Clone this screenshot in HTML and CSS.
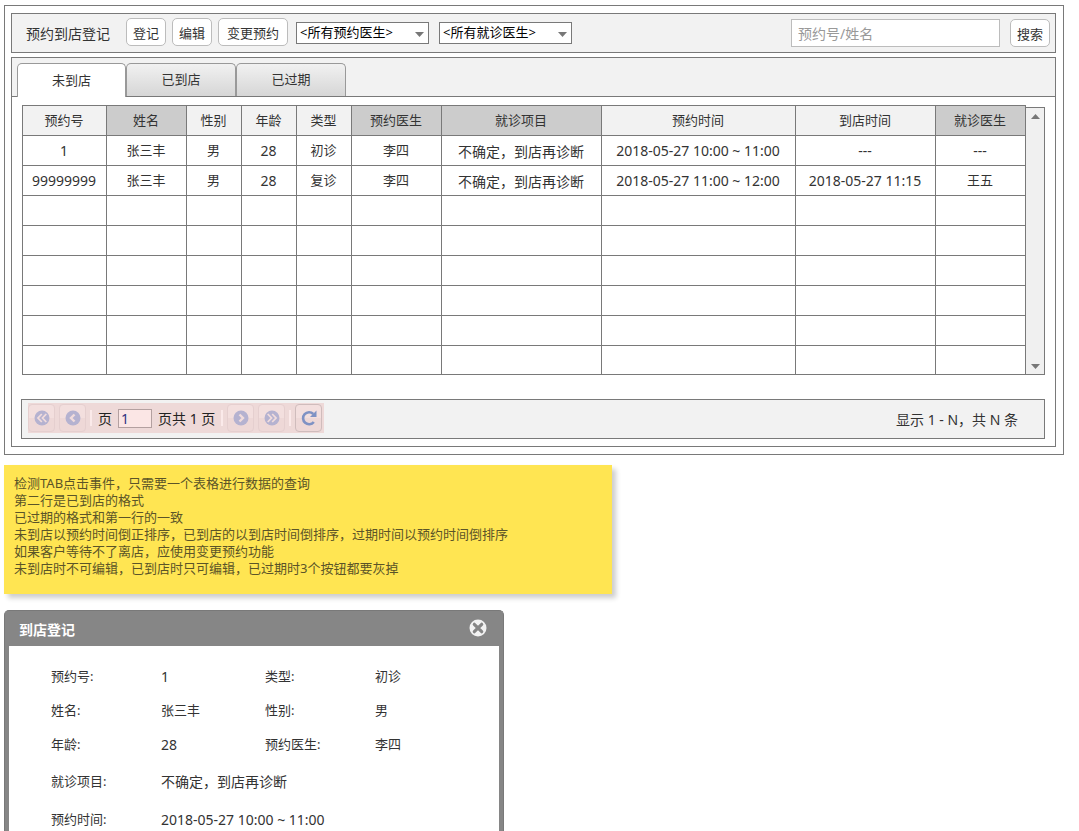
FILE: index.html
```html
<!DOCTYPE html>
<html lang="zh-CN">
<head>
<meta charset="utf-8">
<title>预约到店登记</title>
<link rel="stylesheet" href="styles.css">
</head>
<body>
<main class="frame">
  <header class="toolbar">
    <h1 class="title">预约到店登记</h1>
    <button class="btn" type="button">登记</button>
    <button class="btn" type="button">编辑</button>
    <button class="btn btn-wide" type="button">变更预约</button>
    <div class="filters">
      <select class="filter" aria-label="预约医生"><option>&lt;所有预约医生&gt;</option></select>
      <select class="filter" aria-label="就诊医生"><option>&lt;所有就诊医生&gt;</option></select>
    </div>
    <form class="search">
      <input class="search-input" type="text" placeholder="预约号/姓名" aria-label="预约号/姓名">
      <button class="btn" type="button">搜索</button>
    </form>
  </header>

  <section class="panel">
    <div class="tabs" role="tablist">
      <button class="tab tab-active" type="button" role="tab" aria-selected="true">未到店</button>
      <button class="tab" type="button" role="tab" aria-selected="false">已到店</button>
      <button class="tab" type="button" role="tab" aria-selected="false">已过期</button>
    </div>
    <div class="panel-body">
      <div class="grid">
        <table class="table">
          <colgroup>
            <col class="c-no"><col class="c-name"><col class="c-small"><col class="c-small"><col class="c-small">
            <col class="c-doctor"><col class="c-item"><col><col class="c-arrive"><col class="c-doctor">
          </colgroup>
          <thead>
            <tr><th>预约号</th><th class="dark">姓名</th><th>性别</th><th>年龄</th><th>类型</th><th class="dark">预约医生</th><th class="dark">就诊项目</th><th>预约时间</th><th>到店时间</th><th class="dark">就诊医生</th></tr>
          </thead>
          <tbody>
            <tr><td class="num">1</td><td>张三丰</td><td>男</td><td class="num">28</td><td>初诊</td><td>李四</td><td class="item">不确定，到店再诊断</td><td class="num">2018-05-27 10:00 ~ 11:00</td><td class="num">---</td><td class="num">---</td></tr>
            <tr><td class="num">99999999</td><td>张三丰</td><td>男</td><td class="num">28</td><td>复诊</td><td>李四</td><td class="item">不确定，到店再诊断</td><td class="num">2018-05-27 11:00 ~ 12:00</td><td class="num">2018-05-27 11:15</td><td>王五</td></tr>
            <tr><td></td><td></td><td></td><td></td><td></td><td></td><td></td><td></td><td></td><td></td></tr>
            <tr><td></td><td></td><td></td><td></td><td></td><td></td><td></td><td></td><td></td><td></td></tr>
            <tr><td></td><td></td><td></td><td></td><td></td><td></td><td></td><td></td><td></td><td></td></tr>
            <tr><td></td><td></td><td></td><td></td><td></td><td></td><td></td><td></td><td></td><td></td></tr>
            <tr><td></td><td></td><td></td><td></td><td></td><td></td><td></td><td></td><td></td><td></td></tr>
            <tr class="last"><td></td><td></td><td></td><td></td><td></td><td></td><td></td><td></td><td></td><td></td></tr>
          </tbody>
        </table>
        <div class="scrollbar" aria-hidden="true">
          <svg width="9" height="5" viewBox="0 0 9 5"><path d="M0 5L4.500 0L9 5z" fill="#777"/></svg>
          <svg width="9" height="5" viewBox="0 0 9 5"><path d="M0 0L4.500 5L9 0z" fill="#777"/></svg>
        </div>
      </div>
      <footer class="footer">
        <div class="pager">
          <button class="page-btn" type="button" disabled aria-label="首页">
            <svg width="16" height="16" viewBox="0 0 16 16"><circle cx="8" cy="8" r="7.500" fill="#b5b2d0"/><path d="M7.800 4L4 8L7.800 12M12.300 4L8.500 8L12.300 12" fill="none" stroke="#f1dcdc" stroke-width="1.800"/></svg>
          </button>
          <button class="page-btn" type="button" disabled aria-label="上一页">
            <svg width="16" height="16" viewBox="0 0 16 16"><circle cx="8" cy="8" r="7.500" fill="#b5b2d0"/><path d="M9.500 4.500L6 8L9.500 11.500" fill="none" stroke="#f1dcdc" stroke-width="2.400"/></svg>
          </button>
          <span class="sep"></span>
          <label class="page-label" for="page">页</label>
          <input class="page-input" id="page" type="text" value="1">
          <span class="page-label">页共 1 页</span>
          <span class="sep"></span>
          <button class="page-btn" type="button" disabled aria-label="下一页">
            <svg width="16" height="16" viewBox="0 0 16 16"><circle cx="8" cy="8" r="7.500" fill="#b5b2d0"/><path d="M6.500 4.500L10 8L6.500 11.500" fill="none" stroke="#f1dcdc" stroke-width="2.400"/></svg>
          </button>
          <button class="page-btn" type="button" disabled aria-label="末页">
            <svg width="16" height="16" viewBox="0 0 16 16"><circle cx="8" cy="8" r="7.500" fill="#b5b2d0"/><path d="M3.700 4L7.500 8L3.700 12M8.200 4L12 8L8.200 12" fill="none" stroke="#f1dcdc" stroke-width="1.800"/></svg>
          </button>
          <span class="sep"></span>
          <button class="page-btn refresh" type="button" aria-label="刷新">
            <svg width="16" height="16" viewBox="0 0 16 16"><path d="M12.300 4A6 6 0 1 0 12.800 12" fill="none" stroke="#7f92c4" stroke-width="2.600"/><path d="M15.500 0.500V7H9z" fill="#7f92c4"/></svg>
          </button>
        </div>
        <p class="summary">显示 1 - N，共 N 条</p>
      </footer>
    </div>
  </section>
</main>

<aside class="note">
  <p>检测TAB点击事件，只需要一个表格进行数据的查询</p>
  <p>第二行是已到店的格式</p>
  <p>已过期的格式和第一行的一致</p>
  <p>未到店以预约时间倒正排序，已到店的以到店时间倒排序，过期时间以预约时间倒排序</p>
  <p>如果客户等待不了离店，应使用变更预约功能</p>
  <p>未到店时不可编辑，已到店时只可编辑，已过期时3个按钮都要灰掉</p>
</aside>

<section class="dialog" aria-labelledby="dialog-title">
  <header class="dialog-head">
    <h2 class="dialog-title" id="dialog-title">到店登记</h2>
    <button class="close" type="button" aria-label="关闭">
      <svg width="18" height="18" viewBox="0 0 18 18"><circle cx="9" cy="9" r="8.500" fill="#f2f2f2"/><path d="M5.300 5.300L12.700 12.700M12.700 5.300L5.300 12.700" stroke="#868686" stroke-width="3.200" stroke-linecap="round"/></svg>
    </button>
  </header>
  <dl class="details">
    <dt>预约号:</dt><dd class="num">1</dd><dt>类型:</dt><dd>初诊</dd>
    <dt>姓名:</dt><dd>张三丰</dd><dt>性别:</dt><dd>男</dd>
    <dt>年龄:</dt><dd class="num">28</dd><dt>预约医生:</dt><dd>李四</dd>
    <dt>就诊项目:</dt><dd class="wide large">不确定，到店再诊断</dd>
    <dt>预约时间:</dt><dd class="wide num">2018-05-27 10:00 ~ 11:00</dd>
  </dl>
</section>
</body>
</html>
```
FILE: styles.css
```css
* { box-sizing: border-box; }

body {
  margin: 0;
  padding: 5px 15px 0 4px;
  height: 100vh;
  overflow: hidden;
  display: flex;
  flex-direction: column;
  background: #fff;
  color: #333;
  font: 13px/17px "Noto Sans", "Noto Sans CJK SC", sans-serif;
}

h1, h2, p, dl, dd { margin: 0; }
button, input, select { font: inherit; color: inherit; }
svg { display: block; }

.frame {
  border: 1px solid #797979;
  padding: 7px 7px 7px 6px;
  display: flex;
  flex-direction: column;
  gap: 4px;
}

.toolbar {
  display: flex;
  align-items: center;
  gap: 6px;
  height: 40px;
  padding: 0 5px 2px 14px;
  border: 1px solid #797979;
  background: #f2f2f2;
}
.title { margin-right: 10px; padding-top: 2px; font-size: 14px; font-weight: 400; }
.btn {
  height: 28px;
  padding: 2px 6px 0;
  border: 1px solid #bcbcbc;
  border-radius: 5px;
  background: #fff;
}
.btn-wide { padding: 2px 8px 0; }
.filters { display: flex; gap: 10px; margin-left: 2px; padding-top: 2px; }
.filter {
  appearance: none;
  width: 133px;
  height: 22px;
  padding: 0 20px 1px 3px;
  border: 1px solid #797979;
  border-radius: 0;
  background: url("data:image/svg+xml,%3Csvg xmlns='http://www.w3.org/2000/svg' width='9' height='5'%3E%3Cpath d='M0 0L4.500 5L9 0z' fill='%23777'/%3E%3C/svg%3E") no-repeat right 4px top 9px #fff;
  color: #000;
}
.search { display: flex; gap: 10px; margin-left: auto; padding-top: 2px; }
.search-input {
  width: 209px;
  height: 28px;
  padding: 0 6px;
  border: 1px solid #bcbcbc;
  background: #fff;
  font-size: 14px;
}
.search-input::placeholder { color: #999; }

.panel { border: 1px solid #797979; }
.tabs {
  display: flex;
  height: 39px;
  padding: 5px 5px 0;
  border-bottom: 1px solid #797979;
  background: #f2f2f2;
}
.tab {
  width: 110px;
  height: 33px;
  padding: 0 0 2px;
  border: 1px solid #999;
  border-bottom: 0;
  border-radius: 5px 5px 0 0;
  background: linear-gradient(#f1f1f1, #d6d6d6);
}
.tab-active { width: 109px; height: 34px; padding: 0; background: #fff; }

.panel-body { padding: 8px 10px 7px 9px; }
.grid { display: flex; padding-left: 1px; }
.table {
  flex: 1;
  width: 0;
  table-layout: fixed;
  border-collapse: collapse;
}
.table th, .table td {
  height: 30px;
  padding: 0 1px 1px 0;
  border: 1px solid #797979;
  font-weight: 400;
  text-align: center;
  white-space: nowrap;
}
.table .last td { height: 29px; }
.table th { background: #f2f2f2; }
.table .dark { background: #ccc; }
.table .item { padding-top: 2px; font-size: 14px; }
.num { font-size: 14px; }
.c-no { width: 84px; }
.c-name { width: 80px; }
.c-small { width: 55px; }
.c-doctor { width: 90px; }
.c-item { width: 160px; }
.c-arrive { width: 140px; }
.scrollbar {
  width: 19px;
  margin-top: 2px;
  padding: 6px 4px 5px;
  display: flex;
  flex-direction: column;
  justify-content: space-between;
  align-items: center;
  border: 1px solid #797979;
  border-left: 0;
  background: #f0f0f0;
}

.footer {
  display: flex;
  justify-content: space-between;
  height: 40px;
  margin-top: 24px;
  padding: 3px 26px 0 6px;
  border: 1px solid #797979;
  background: #f2f2f2;
}
.pager {
  display: flex;
  align-items: center;
  gap: 4px;
  height: 30px;
  padding-right: 2px;
  background: #eed9d8;
}
.page-btn {
  display: flex;
  align-items: center;
  justify-content: center;
  width: 27px;
  height: 28px;
  padding: 0;
  border: 1px solid #e5cfcf;
  border-radius: 4px;
  background: linear-gradient(#f3dfde 50%, #eed8d7 50%);
}
.refresh { border-color: #cfbcbc; }
.sep { width: 2px; height: 16px; background: #fbeaea; }
.page-label { padding: 0 2px; font-size: 14px; color: #222; }
.page-input {
  width: 34px;
  height: 19px;
  padding: 0 2px;
  border: 1px solid #b3a0a0;
  background: #fbe6e5;
  color: #303080;
  font-size: 14px;
}
.summary { padding-top: 8px; font-size: 14px; }

.note {
  width: 608px;
  height: 129px;
  margin-top: 10px;
  padding: 10px;
  background: #ffe552;
  color: #5b5428;
  box-shadow: 4px 4px 5px rgba(0, 0, 0, 0.2);
}

.dialog {
  flex: 1;
  min-height: 0;
  width: 500px;
  margin-top: 16px;
  padding: 0 4px;
  overflow: hidden;
  border: 1px solid #797979;
  border-bottom: 0;
  border-radius: 5px 5px 0 0;
  background: #868686;
}
.dialog-head {
  display: flex;
  justify-content: space-between;
  align-items: center;
  height: 35px;
  padding: 0 12px 2px 10px;
}
.dialog-title { padding-top: 4px; font-size: 14px; font-weight: 700; color: #fff; }
.close { padding: 0; border: 0; background: none; }
.details {
  display: grid;
  grid-template-columns: 110px 104px 110px 1fr;
  grid-template-rows: 34px 34px 34px 40px 36px;
  align-items: center;
  height: 100%;
  padding: 13px 20px 0 42px;
  background: #fff;
}
.wide { grid-column: span 3; }
.large { font-size: 14px; }
```
